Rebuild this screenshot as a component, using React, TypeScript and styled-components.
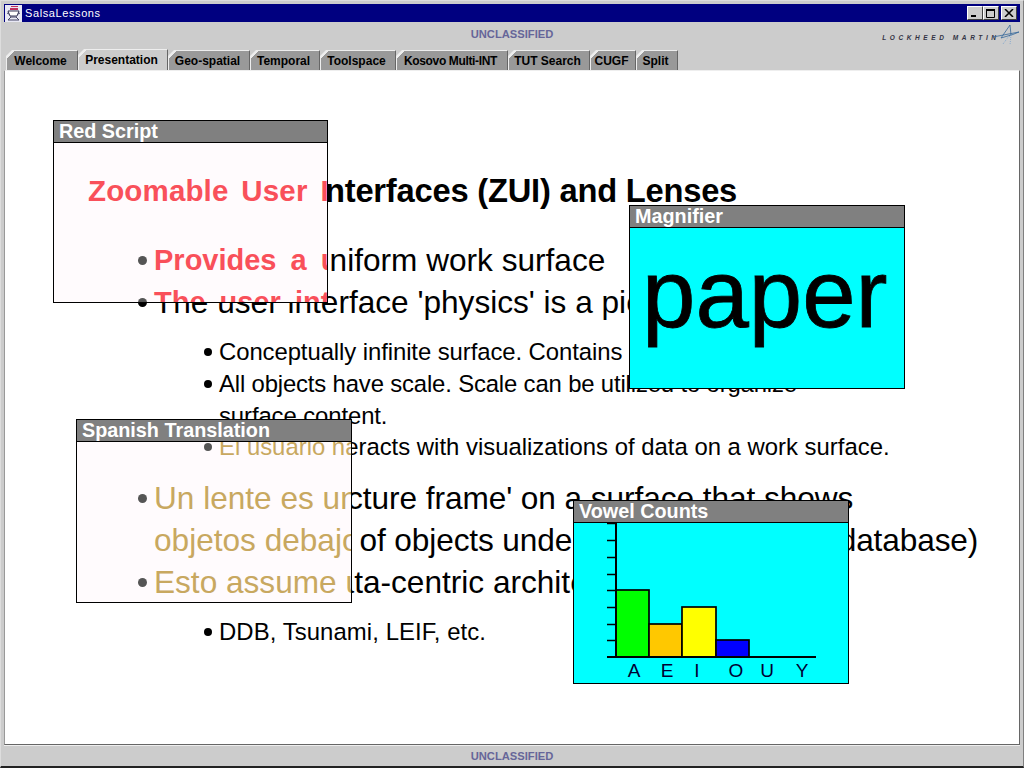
import React from "react";
import styled, { createGlobalStyle } from "styled-components";

const CANVAS_X = 5;
const CANVAS_Y = 71;

const GlobalStyle = createGlobalStyle`
  html, body {
    margin: 0;
    padding: 0;
    background: #cccccc;
    font-family: "Liberation Sans", Arial, sans-serif;
  }
`;

const Frame = styled.div`
  width: 1024px;
  height: 768px;
  box-sizing: border-box;
  display: flex;
  flex-direction: column;
  overflow: hidden;
  background: #cccccc;
  border-top: 1px solid #dddddd;
  border-left: 1px solid #dddddd;
  border-right: 1px solid #808080;
  border-bottom: 2px solid #222222;
  padding: 3px 3px 0 3px;
`;

const TitleBar = styled.div`
  height: 18px;
  flex: none;
  background: #000080;
  display: flex;
  align-items: center;
  padding: 0 3px 0 1px;
`;

const AppIcon = styled.svg`
  width: 17px;
  height: 17px;
  flex: none;
`;

const AppTitle = styled.span`
  margin-left: 3px;
  color: #ffffff;
  font-size: 11px;
  letter-spacing: 0.6px;
  flex: 1;
`;

const WinButton = styled.button<{ $gap?: boolean }>`
  width: 16px;
  height: 14px;
  margin-left: ${(p) => (p.$gap ? 2 : 0)}px;
  padding: 0;
  box-sizing: border-box;
  background: #cccccc;
  border: 1px solid;
  border-color: #ffffff #404040 #404040 #ffffff;
  display: flex;
  align-items: center;
  justify-content: center;
`;

const Banner = styled.div`
  height: 27px;
  box-sizing: border-box;
  padding-bottom: 4px;
  flex: none;
  display: flex;
  align-items: center;
  justify-content: center;
  position: relative;
`;

const Marking = styled.span`
  color: #666699;
  font-size: 11.2px;
  font-weight: bold;
`;

const Logo = styled.div`
  position: absolute;
  right: 1px;
  top: 2px;
  height: 22px;
  display: flex;
  align-items: center;
`;

const LogoText = styled.span`
  color: #333344;
  font-size: 6.5px;
  font-weight: bold;
  font-style: italic;
  letter-spacing: 3.6px;
  white-space: nowrap;
  margin: 4px -6.6px 0 0;
`;

const TabStrip = styled.div`
  height: 21px;
  flex: none;
  display: flex;
  align-items: flex-end;
  padding-left: 2px;
`;

const Tab = styled.div<{ $width: number; $active?: boolean; $squeeze?: boolean }>`
  --fill: ${(p) => (p.$active ? "#cccccc" : "#999999")};
  width: ${(p) => p.$width}px;
  height: ${(p) => (p.$active ? 21 : 20)}px;
  box-sizing: border-box;
  display: flex;
  align-items: center;
  justify-content: center;
  padding-right: 3px;
  font-size: 12px;
  font-weight: bold;
  letter-spacing: ${(p) => (p.$squeeze ? -0.35 : 0)}px;
  color: #000000;
  background: linear-gradient(135deg, #eeeeee 5.2px, var(--fill) 5.2px);
  border-top: 1px solid #eeeeee;
  border-left: 1px solid #eeeeee;
  border-right: 1px solid #666666;
  clip-path: polygon(6px 0, 100% 0, 100% 100%, 0 100%, 0 6px);
`;

const Canvas = styled.div`
  position: relative;
  flex: 1;
  overflow: hidden;
  background: #ffffff;
  border-top: 1px solid #eeeeee;
  border-left: 1px solid #999999;
  border-right: 1px solid #666666;
  border-bottom: 1px solid #666666;
`;

const Footer = styled.div`
  height: 20px;
  flex: none;
  display: flex;
  align-items: center;
  justify-content: center;
  border-top: 1px solid #eeeeee;
`;

const SlideView = styled.div<{ $x?: number; $y?: number }>`
  position: absolute;
  left: ${(p) => -(p.$x ?? 0)}px;
  top: ${(p) => -(p.$y ?? 0)}px;
  width: 1016px;
  padding-top: 100px;
`;

const TitleRow = styled.div<{ $script?: boolean }>`
  height: 40px;
  line-height: 40px;
  padding-left: ${(p) => (p.$script ? 83 : 69)}px;
  font-size: ${(p) => (p.$script ? 29.5 : 32.7)}px;
  font-weight: bold;
  white-space: nowrap;
  letter-spacing: ${(p) => (p.$script ? 0.15 : -0.22)}px;
  word-spacing: ${(p) => (p.$script ? 4.5 : 0)}px;
  color: ${(p) => (p.$script ? "#f9505a" : "#000000")};
  margin-bottom: 28px;
`;

const Row = styled.div<{ $level: 1 | 2; $after?: number }>`
  display: flex;
  align-items: center;
  height: ${(p) => (p.$level === 1 ? 42 : 32)}px;
  padding-left: ${(p) => (p.$level === 1 ? 133 : 199)}px;
  margin-bottom: ${(p) => p.$after ?? 0}px;
  white-space: nowrap;
`;

const Bullet = styled.span<{ $level: 1 | 2; $hidden?: boolean; $tone: string }>`
  flex: none;
  width: ${(p) => (p.$level === 1 ? 9 : 8)}px;
  height: ${(p) => (p.$level === 1 ? 9 : 8)}px;
  border-radius: 50%;
  background: ${(p) => (p.$hidden ? "transparent" : p.$tone)};
  margin-right: 7px;
`;

const RowText = styled.span<{ $level: 1 | 2; $color: string; $script?: boolean; $track?: number }>`
  font-size: ${(p) => (p.$script ? 29 : p.$level === 1 ? 31.6 : 23.9)}px;
  color: ${(p) => p.$color};
  font-weight: ${(p) => (p.$script ? "bold" : "normal")};
  word-spacing: ${(p) => (p.$script ? 6 : 0)}px;
  letter-spacing: ${(p) => p.$track ?? 0}px;
`;

const Lens = styled.div<{ $x: number; $y: number; $width: number; $height: number }>`
  position: absolute;
  left: ${(p) => p.$x - CANVAS_X}px;
  top: ${(p) => p.$y - CANVAS_Y}px;
  width: ${(p) => p.$width}px;
  height: ${(p) => p.$height}px;
  box-sizing: border-box;
  border: 1px solid #000000;
  display: flex;
  flex-direction: column;
`;

const LensHeader = styled.div`
  height: 22px;
  flex: none;
  box-sizing: border-box;
  background: #808080;
  border-bottom: 1px solid #000000;
  color: #ffffff;
  font-size: 19.8px;
  font-weight: bold;
  line-height: 21px;
  padding-left: 5px;
  white-space: nowrap;
`;

const LensBody = styled.div<{ $bg: string }>`
  position: relative;
  flex: 1;
  overflow: hidden;
  background: ${(p) => p.$bg};
`;

const MagnifiedWord = styled.div`
  font-size: 96px;
  line-height: 132px;
  color: #000000;
  -webkit-text-stroke: 0.8px #000000;
  padding-left: 12px;
`;

type Line = { level: 1 | 2; text: string; bullet?: boolean; after?: number; track?: number };

const slideLines: Line[] = [
  { level: 1, text: "Provides a uniform work surface", bullet: true },
  { level: 1, text: "The user interface 'physics' is a piece of paper", bullet: true, after: 13 },
  { level: 2, text: "Conceptually infinite surface. Contains objects.", bullet: true, track: -0.08 },
  { level: 2, text: "All objects have scale. Scale can be utilized to organize", bullet: true, track: -0.16 },
  { level: 2, text: "surface content.", after: -1, track: -0.1 },
  { level: 2, text: "The user interacts with visualizations of data on a work surface.", bullet: true, after: 14 },
  { level: 1, text: "A Lens is a 'picture frame' on a surface that shows", bullet: true, track: -0.06 },
  { level: 1, text: "a clipped view of objects underneath (e.g. from a database)", track: -0.11 },
  { level: 1, text: "Assumes a data-centric architecture", bullet: true, after: 13 },
  { level: 2, text: "DDB, Tsunami, LEIF, etc.", bullet: true, track: 0.08 },
];

const redLines: Line[] = [
  { level: 1, text: "Provides a uniform work surface", bullet: true },
  { level: 1, text: "The user interface 'physics' is a piece of paper", bullet: true },
];

const spanishLines: Line[] = [
  { level: 1, text: "" },
  { level: 1, text: "", after: 13 },
  { level: 2, text: "" },
  { level: 2, text: "" },
  { level: 2, text: "", after: -1 },
  { level: 2, text: "El usuario navega por visualizaciones de datos.", bullet: true, after: 14 },
  { level: 1, text: "Un lente es un marco sobre una superficie", bullet: true },
  { level: 1, text: "objetos debajo de él" },
  { level: 1, text: "Esto assume una arquitectura", bullet: true },
];

const tabs = [
  { label: "Welcome", width: 72 },
  { label: "Presentation", width: 90, active: true },
  { label: "Geo-spatial", width: 82 },
  { label: "Temporal", width: 70 },
  { label: "Toolspace", width: 76 },
  { label: "Kosovo Multi-INT", width: 112, squeeze: true },
  { label: "TUT Search", width: 82 },
  { label: "CUGF", width: 46 },
  { label: "Split", width: 42 },
];

const Lines = ({ lines, color, bulletTone, script }: { lines: Line[]; color: string; bulletTone: string; script?: boolean }) => (
  <>
    {lines.map((line, i) => (
      <Row key={i} $level={line.level} $after={line.after}>
        <Bullet $level={line.level} $hidden={!line.bullet} $tone={bulletTone} />
        <RowText $level={line.level} $color={color} $script={script} $track={line.track}>
          {line.text}
        </RowText>
      </Row>
    ))}
  </>
);

const VowelChart = () => {
  const bars = [
    { x: 42, w: 33, top: 67, fill: "#00ff00" },
    { x: 75, w: 33, top: 101, fill: "#ffc800" },
    { x: 108, w: 34, top: 84, fill: "#ffff00" },
    { x: 142, w: 33, top: 117, fill: "#0000ff" },
  ];
  const ticks = [0, 17, 34, 51, 67, 84, 101, 117];
  const labels = [
    { t: "A", x: 60 },
    { t: "E", x: 93 },
    { t: "I", x: 123 },
    { t: "O", x: 162 },
    { t: "U", x: 193 },
    { t: "Y", x: 228 },
  ];
  return (
    <svg width="274" height="160" viewBox="0 0 274 160">
      {bars.map((b) => (
        <rect key={b.x} x={b.x} y={b.top} width={b.w} height={134 - b.top} fill={b.fill} stroke="#000" strokeWidth="1.7" />
      ))}
      <line x1="42" y1="0" x2="42" y2="134" stroke="#000" strokeWidth="2" />
      {ticks.map((y) => (
        <line key={y} x1="33" y1={y + 0.5} x2="42" y2={y + 0.5} stroke="#000" strokeWidth="1.5" />
      ))}
      <line x1="33" y1="134" x2="242" y2="134" stroke="#000" strokeWidth="2" />
      {labels.map((l) => (
        <text key={l.t} x={l.x} y="154" textAnchor="middle" fontSize="19" fontFamily="Liberation Sans, Arial, sans-serif" fill="#000033">
          {l.t}
        </text>
      ))}
    </svg>
  );
};

export default function App() {
  return (
    <>
      <GlobalStyle />
      <Frame>
        <TitleBar>
          <AppIcon viewBox="0 0 17 17">
            <rect width="17" height="17" fill="#e8e8f4" />
            <path d="M6 1h7v1H6zM5 3h8v2H5z" fill="#c03060" />
            <path d="M3 6h11M3 6l2 5h7l2-5" fill="#ffffff" stroke="#333355" />
            <path d="M2 8l2 1M15 8l-2 1M5 12h7M3 15l3-3M14 15l-3-3M3 15h11" fill="none" stroke="#444466" />
          </AppIcon>
          <AppTitle>SalsaLessons</AppTitle>
          <WinButton>
            <svg width="10" height="8" viewBox="0 0 10 8"><rect x="1" y="6" width="5" height="2" fill="#000" /></svg>
          </WinButton>
          <WinButton>
            <svg width="10" height="9" viewBox="0 0 10 9"><path d="M.5 1.5h8v7h-8z" fill="none" stroke="#000" /><rect x="0" y="0" width="9" height="2" fill="#000" /></svg>
          </WinButton>
          <WinButton $gap>
            <svg width="10" height="8" viewBox="0 0 10 8"><path d="M1 0l8 8M9 0L1 8" stroke="#000" strokeWidth="1.5" /></svg>
          </WinButton>
        </TitleBar>
        <Banner>
          <Marking>UNCLASSIFIED</Marking>
          <Logo>
            <LogoText>LOCKHEED MARTIN</LogoText>
            <svg width="26" height="22" viewBox="0 0 26 22">
              <path d="M17 1L8 14l10-3z" fill="none" stroke="#336699" strokeWidth="0.8" />
              <path d="M0 13l26-5-10 4" fill="none" stroke="#336699" strokeWidth="0.8" />
              <path d="M18 11l-1 10M10 20l6-8" fill="none" stroke="#88aacc" strokeWidth="1" strokeDasharray="1 1" />
            </svg>
          </Logo>
        </Banner>
        <TabStrip>
          {tabs.map((t) => (
            <Tab key={t.label} $width={t.width} $active={t.active} $squeeze={t.squeeze}>
              {t.label}
            </Tab>
          ))}
        </TabStrip>
        <Canvas>
          <SlideView>
            <TitleRow>Zoomable User Interfaces (ZUI) and Lenses</TitleRow>
            <Lines lines={slideLines} color="#000000" bulletTone="#000000" />
          </SlideView>

          <Lens $x={53} $y={120} $width={275} $height={183}>
            <LensHeader>Red Script</LensHeader>
            <LensBody $bg="#fffbfd">
              <SlideView $x={49} $y={72}>
                <TitleRow $script>Zoomable User Interfaces (ZUI) and Lenses</TitleRow>
                <Lines lines={redLines} color="#f9505a" bulletTone="#555555" script />
              </SlideView>
            </LensBody>
          </Lens>

          <Lens $x={76} $y={419} $width={276} $height={184}>
            <LensHeader>Spanish Translation</LensHeader>
            <LensBody $bg="#fffbfd">
              <SlideView $x={72} $y={371}>
                <TitleRow />
                <Lines lines={spanishLines} color="#c8a860" bulletTone="#555555" />
              </SlideView>
            </LensBody>
          </Lens>

          <Lens $x={629} $y={205} $width={276} $height={184}>
            <LensHeader>Magnifier</LensHeader>
            <LensBody $bg="#00ffff">
              <MagnifiedWord>paper</MagnifiedWord>
            </LensBody>
          </Lens>

          <Lens $x={573} $y={500} $width={276} $height={184}>
            <LensHeader>Vowel Counts</LensHeader>
            <LensBody $bg="#00ffff">
              <VowelChart />
            </LensBody>
          </Lens>
        </Canvas>
        <Footer>
          <Marking>UNCLASSIFIED</Marking>
        </Footer>
      </Frame>
    </>
  );
}
